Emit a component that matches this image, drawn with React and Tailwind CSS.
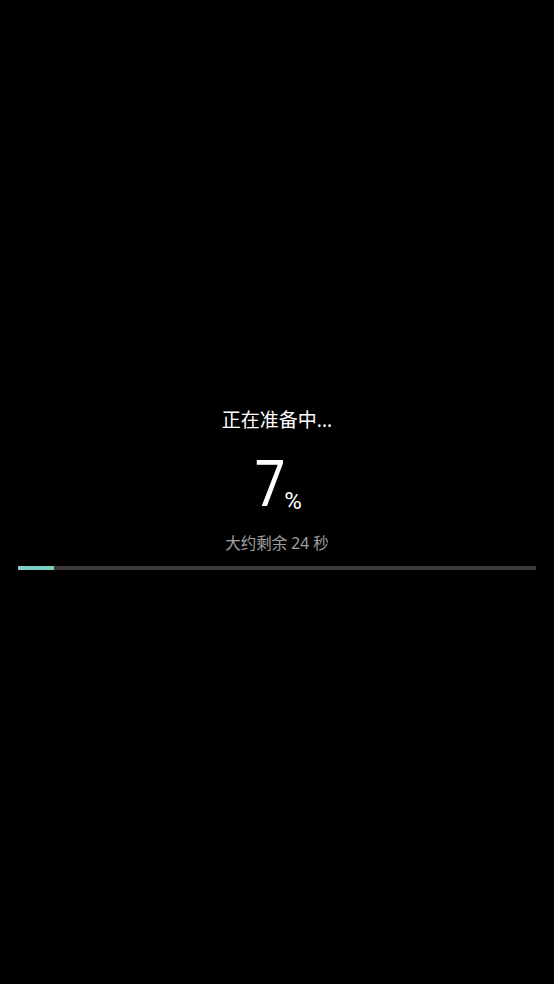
export default function App() {
  const pct = 7;
  return (
    <div className="w-full h-[984px] bg-black flex flex-col justify-center pb-[6px] font-['Noto_Sans','Noto_Sans_CJK_SC',sans-serif]">
      <div className="flex flex-col items-center mt-[-2px]">
        <div className="text-white text-[19px] leading-[28px]">正在准备中...</div>
        <div className="flex items-end mt-[20px] h-[62px]">
          <span className="text-white text-[64px] leading-[62px] font-normal font-['Roboto',sans-serif] scale-x-[0.85] inline-block">{pct}</span>
          <span className="text-white text-[24px] leading-[26px] mb-[2px] -ml-[4px] font-['Roboto',sans-serif]">%</span>
        </div>
        <div className="text-[#a0a0a0] text-[15.5px] leading-[22px] mt-[16px]">大约剩余 24 秒</div>
      </div>
      <div className="mx-[18px] mt-[12px] h-[4px] bg-[#3c3c3c]">
        <div className="h-full bg-[#7ecdc4]" style={{ width: `${pct}%` }} />
      </div>
    </div>
  );
}
